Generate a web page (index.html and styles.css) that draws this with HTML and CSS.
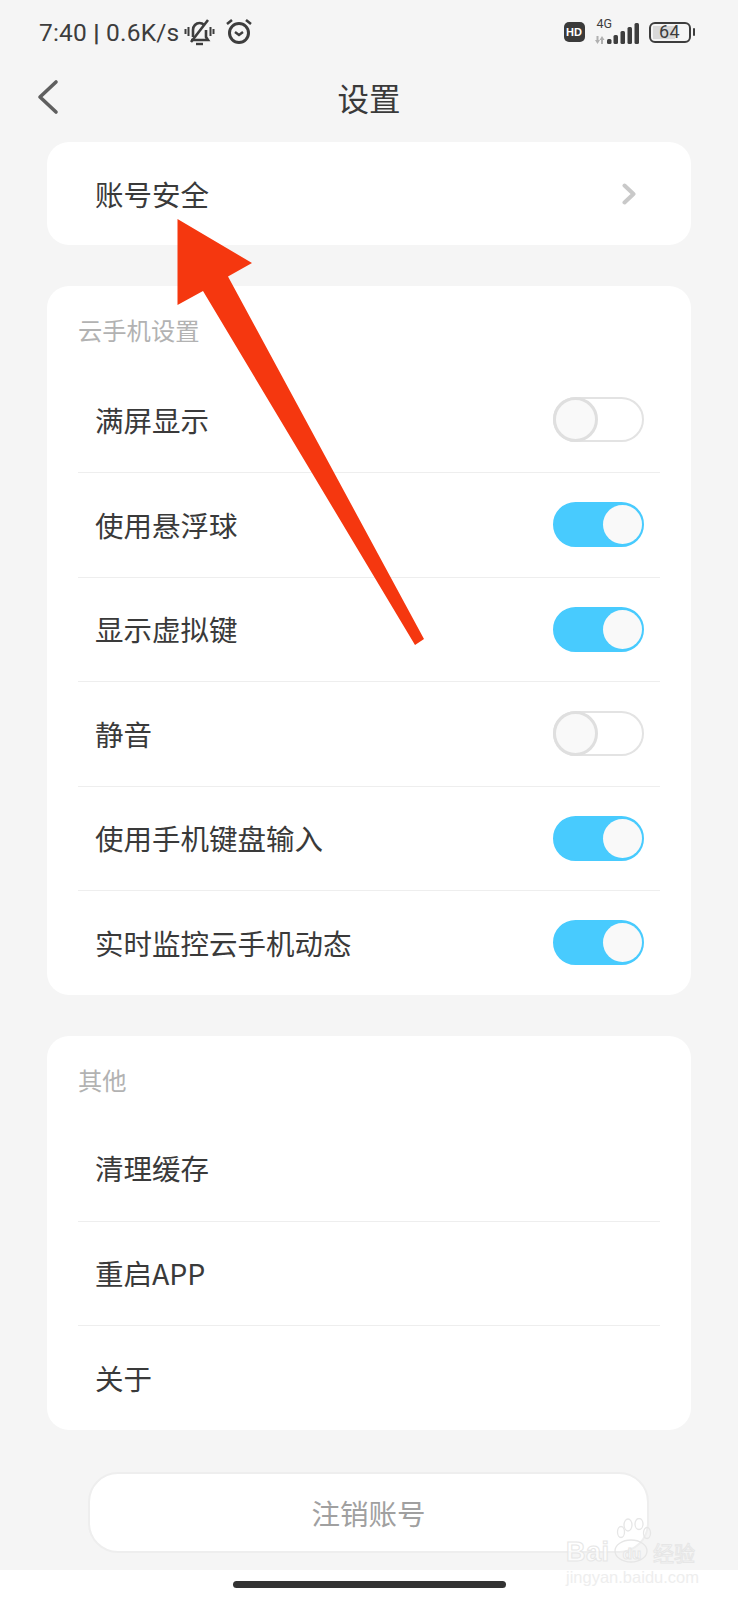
FILE: index.html
```html
<!DOCTYPE html>
<html lang="zh-CN">
  <head>
    <meta charset="UTF-8" />
    <meta name="viewport" content="width=device-width, initial-scale=1.0" />
    <title>设置</title>
    <link rel="stylesheet" href="styles.css">
  </head>
  <body>
    <div class="page">
      <div class="status-bar">
        <div class="status-left">
          <span class="status-text">7:40 <b>|</b> 0.6K/s</span>
          <svg class="icon-bell" width="31" height="29" viewBox="0 0 31 29" fill="none" stroke="#3d3d3d">
            <path d="M9 19V12c0-4 3-7 6.500-7 2 0 3.500 .8 4.800 2M22 12v7l2 3H7" stroke-width="2.600" />
            <path d="M12 26h7" stroke-width="2.400" />
            <path d="M7 24L24 2" stroke-width="2.600" />
            <path d="M1.500 11v5M4.500 9v9M26.500 9v9M29.500 11v5" stroke-width="2" />
          </svg>
          <svg class="icon-alarm" width="28" height="26" viewBox="0 0 28 26" fill="none" stroke="#3d3d3d">
            <circle cx="14" cy="15" r="9.500" stroke-width="3" />
            <path d="M10 14l4 3 4-3" stroke-width="2.400" />
            <path d="M2 6l5-4M26 6l-5-4" stroke-width="2.600" />
          </svg>
        </div>
        <div class="status-right">
          <span class="hd-badge">HD</span>
          <div class="signal">
            <span class="net-type">4G</span>
            <svg width="44" height="21" viewBox="0 0 44 21" fill="#3d3d3d">
              <path d="M1.500 13h2v4H5l-2.500 4L0 17h1.500zM6 21h2v-4h1.500L7 13l-2.500 4H6z" fill="#b0b0b0" />
              <rect x="12" y="16" width="4.500" height="5" rx="1.500" />
              <rect x="18.500" y="12" width="4.500" height="9" rx="1.500" />
              <rect x="25.500" y="8" width="4.500" height="13" rx="1.500" />
              <rect x="32.500" y="4" width="4.500" height="17" rx="1.500" />
              <rect x="39.500" y="0" width="4.500" height="21" rx="1.500" />
            </svg>
          </div>
          <div class="battery">
            <span class="battery-level"></span>
            <span class="battery-num">64</span>
          </div>
          <span class="battery-cap"></span>
        </div>
      </div>

      <div class="nav-bar">
        <svg class="back" width="22" height="36" viewBox="0 0 22 36" fill="none" stroke="#5f5f5f" stroke-width="3.600" stroke-linecap="round" stroke-linejoin="round">
          <path d="M19 3L3 18l16 15" />
        </svg>
        <div class="nav-title">设置</div>
      </div>

      <div class="content">
        <div class="card card-single">
          <div class="row">
            <span class="label">账号安全</span>
            <svg class="chevron" width="14" height="22" viewBox="0 0 14 22" fill="none" stroke="#c9c9c9" stroke-width="4" stroke-linecap="round" stroke-linejoin="round">
              <path d="M2.500 2.500L11.500 11l-9 8.500" />
            </svg>
          </div>
        </div>

        <div class="card">
          <div class="card-title">云手机设置</div>
          <div class="row"><span class="label">满屏显示</span><span class="switch"><i></i></span></div>
          <div class="row"><span class="label">使用悬浮球</span><span class="switch on"><i></i></span></div>
          <div class="row"><span class="label">显示虚拟键</span><span class="switch on"><i></i></span></div>
          <div class="row"><span class="label">静音</span><span class="switch"><i></i></span></div>
          <div class="row"><span class="label">使用手机键盘输入</span><span class="switch on"><i></i></span></div>
          <div class="row"><span class="label">实时监控云手机动态</span><span class="switch on"><i></i></span></div>
        </div>

        <div class="card">
          <div class="card-title card-title-short">其他</div>
          <div class="row"><span class="label">清理缓存</span></div>
          <div class="row"><span class="label">重启APP</span></div>
          <div class="row"><span class="label">关于</span></div>
        </div>

        <div class="logout">注销账号</div>
      </div>

      <div class="home-bar"><span class="home-pill"></span></div>

      <!-- 红色箭头标注 -->
      <svg class="arrow" width="738" height="660" viewBox="0 0 738 660">
        <polygon points="177.500,219 252,263 228,276.500 424,639 415,645 203,291 177.500,305" fill="#f5370f" />
      </svg>

      <!-- 水印 -->
      <div class="watermark">
        <svg class="paw" width="40" height="46" viewBox="0 0 40 46" fill="none" stroke="#e6e6e6" stroke-width="1.300">
          <ellipse cx="9" cy="14" rx="3.500" ry="5.500" />
          <ellipse cx="16" cy="7" rx="4" ry="6" />
          <ellipse cx="27" cy="6" rx="4" ry="5.500" />
          <ellipse cx="35" cy="15" rx="3.500" ry="5.500" />
          <ellipse cx="19" cy="33" rx="16" ry="11" />
        </svg>
        <div class="wm-top"><span class="wm-bai">Bai</span><span class="wm-du">du</span><span class="wm-cn">经验</span></div>
        <div class="wm-url">jingyan.baidu.com</div>
      </div>
    </div>
  </body>
</html>
```

FILE: styles.css
```css
* {
  box-sizing: border-box;
}
html,
body {
  margin: 0;
  height: 1600px;
  overflow: hidden;
}
body {
  background: #f5f5f5;
  color: #3a3a3a;
  font-family: "Noto Sans CJK SC", "Noto Sans", sans-serif;
}
.page {
  position: relative;
  display: flex;
  flex-direction: column;
  width: 738px;
  height: 1600px;
}

/* 状态栏 */
.status-bar {
  display: flex;
  justify-content: space-between;
  align-items: center;
  height: 64px;
  padding: 0 43px 0 39px;
  color: #3d3d3d;
}
.status-left {
  display: flex;
  align-items: center;
}
.status-text {
  font-family: Roboto, sans-serif;
  font-size: 24.500px;
  letter-spacing: 0.200px;
  white-space: nowrap;
}
.status-text b {
  font-weight: 900;
}
.icon-bell {
  margin: 1px 0 0 5px;
}
.icon-alarm {
  margin: -2px 0 0 10px;
}
.status-right {
  display: flex;
  align-items: center;
}
.hd-badge {
  width: 21px;
  height: 20px;
  border-radius: 5px;
  background: #3a3a3a;
  color: #fff;
  font: bold 11px/20px "Liberation Sans", sans-serif;
  text-align: center;
}
.signal {
  position: relative;
  width: 44px;
  height: 23px;
  margin: 0 10px 0 10px;
}
.signal svg {
  position: absolute;
  left: 0;
  bottom: 0;
}
.net-type {
  position: absolute;
  left: 2px;
  top: -3px;
  font: 12.500px/12px Roboto, sans-serif;
}
.battery {
  position: relative;
  width: 42px;
  height: 21px;
  border: 2.500px solid #3d3d3d;
  border-radius: 6px;
  overflow: hidden;
}
.battery-level {
  position: absolute;
  left: 2px;
  top: 2px;
  bottom: 2px;
  width: 22px;
  background: #d9d9d9;
}
.battery-num {
  position: absolute;
  inset: 0;
  font: 18px/16px Roboto, sans-serif;
  letter-spacing: 0.500px;
  text-align: center;
}
.battery-cap {
  width: 2.500px;
  height: 8px;
  margin-left: 2px;
  border-radius: 1px;
  background: #3d3d3d;
}

/* 导航 */
.nav-bar {
  display: flex;
  justify-content: center;
  align-items: center;
  position: relative;
  height: 78px;
}
.back {
  position: absolute;
  left: 37px;
  top: 15px;
}
.nav-title {
  font-size: 31.500px;
  line-height: 40px;
  margin-top: -12px;
}

/* 卡片列表 */
.content {
  display: flex;
  flex-direction: column;
  gap: 41px;
  padding: 0 47px;
}
.card {
  padding: 0 31px;
  border-radius: 22px;
  background: #fff;
}
.card-title {
  height: 81.500px;
  padding-top: 28px;
  color: #b2b2b2;
  font-size: 24.300px;
  line-height: 32px;
}
.card-title-short {
  height: 80.500px;
}
.row {
  display: flex;
  justify-content: space-between;
  align-items: center;
  height: 104.500px;
  padding: 0 16px 0 17px;
  border-top: 1.500px solid #eeeeee;
  font-size: 28.500px;
}
.label {
  margin-bottom: 1px;
}
.card-title + .row {
  border-top: none;
}
.card-single .row {
  height: 103px;
  border-top: none;
}
.chevron {
  margin-right: 8px;
}

/* 开关 */
.switch {
  display: flex;
  align-items: center;
  width: 91px;
  height: 45px;
  border: 2.500px solid #e3e3e3;
  border-radius: 23px;
  background: #fff;
}
.switch i {
  width: 45px;
  height: 45px;
  margin-left: -2.500px;
  border: 3.500px solid #dfdfdf;
  border-radius: 50%;
  background: #f9f9f9;
}
.switch.on {
  justify-content: flex-end;
  border-color: #48cbfe;
  background: #48cbfe;
}
.switch.on i {
  width: 39px;
  height: 39px;
  margin: 0 0.500px 0 0;
  border: none;
}

/* 注销按钮 */
.logout {
  height: 81px;
  margin: 1px 42px 0 41px;
  border: 2px solid #eeeeee;
  border-radius: 30px;
  background: #fff;
  color: #a0a0a0;
  font-size: 28.500px;
  line-height: 77px;
  text-align: center;
}

/* 底部横条 */
.home-bar {
  position: absolute;
  left: 0;
  right: 0;
  bottom: 0;
  display: flex;
  justify-content: center;
  height: 30px;
  padding-top: 11px;
  background: #fff;
}
.home-pill {
  width: 273px;
  height: 7px;
  border-radius: 4px;
  background: #333;
}

/* 标注与水印，盖在内容上 */
.arrow {
  position: absolute;
  left: 0;
  top: 0;
  pointer-events: none;
}
.watermark {
  position: absolute;
  left: 566px;
  top: 1518px;
  width: 132px;
  height: 68px;
}
.paw {
  position: absolute;
  left: 46px;
  top: 0;
}
.wm-top {
  position: absolute;
  left: 0;
  top: 19px;
  display: flex;
  align-items: center;
  white-space: nowrap;
  color: rgba(255, 255, 255, 0.700);
  -webkit-text-stroke: 1px #e6e6e6;
}
.wm-bai {
  width: 50px;
  font: bold 27px/30px "Liberation Sans", sans-serif;
  letter-spacing: 0.500px;
}
.wm-du {
  width: 32px;
  margin-top: 4px;
  font: bold 15px/24px "Liberation Sans", sans-serif;
  text-align: center;
}
.wm-cn {
  margin-left: 5px;
  font-size: 21px;
  line-height: 30px;
}
.wm-url {
  position: absolute;
  left: 0;
  top: 50px;
  color: #eeeeee;
  font: 16.500px/18px "Liberation Sans", sans-serif;
  white-space: nowrap;
}
```
